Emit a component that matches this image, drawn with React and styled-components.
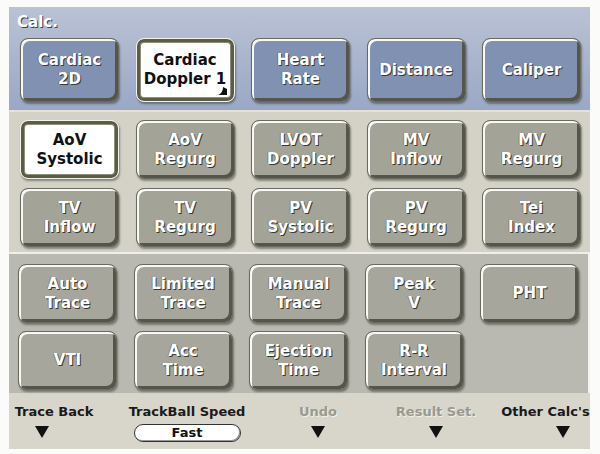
import React from 'react'
import styled, { createGlobalStyle, css } from 'styled-components'

const GlobalStyle = createGlobalStyle`
  body {
    margin: 0;
    background: #fbfbf9;
    font-family: 'DejaVu Sans', Verdana, sans-serif;
  }
`

const Frame = styled.div`
  width: 600px;
  height: 454px;
  box-sizing: border-box;
  padding: 7px 10px 5px 9px;
`

const Panel = styled.div`
  display: flex;
  flex-direction: column;
  height: 100%;
`

const TopSection = styled.div`
  height: 105px;
  box-sizing: border-box;
  padding: 6px 0 0 11px;
  background: linear-gradient(#bac2d4, #9aa8c6);
  border-bottom: 2px solid #e4e2d8;
`

const Title = styled.div`
  color: #fff;
  font-weight: bold;
  font-size: 15px;
  line-height: 18px;
  margin: 0 0 7px -3px;
  text-shadow: 1px 1px 0 #3c4050;
`

const Section = styled.div`
  box-sizing: border-box;
  height: ${(p) => p.$h}px;
  padding: ${(p) => p.$pad};
  background: ${(p) => p.$bg};
  ${(p) =>
    p.$inset &&
    css`
      border-top: 2px solid #efeee8;
      border-right: 2px solid #f4f3ee;
    `}
`

const Grid = styled.div`
  display: grid;
  grid-template-columns: repeat(5, 99px);
  grid-auto-rows: ${(p) => p.$rowH}px;
  column-gap: 16.5px;
  row-gap: ${(p) => p.$gap || 0}px;
`

const Key = styled.div`
  position: relative;
  display: flex;
  align-items: center;
  justify-content: center;
  text-align: center;
  border-radius: 8px;
  font-weight: bold;
  font-size: 15px;
  line-height: 19px;
  color: #fff;
  text-shadow: 1px 1px 0 #3a3a34, -1px 0 0 rgba(60, 60, 50, 0.35);
  background: ${(p) => p.$bg};
  border: 1px solid #6a6a5e;
  box-shadow: inset 2px 2px 0 #f8f8f4, inset -3px -3px 0 #55554b,
    1px 2px 2px rgba(40, 40, 30, 0.45);
  ${(p) =>
    p.$active &&
    css`
      background: #fff;
      color: #111;
      text-shadow: none;
      border: 1px solid #f2f2ec;
      box-shadow: inset 0 0 0 3px #5b5c44, inset 0 0 0 4px #8e8f78,
        1px 2px 2px rgba(40, 40, 30, 0.45);
    `}
`

const Corner = styled.svg`
  position: absolute;
  right: 7px;
  bottom: 6px;
`

const Footer = styled.div`
  flex: 1;
  display: grid;
  grid-template-columns: 90px 176px 86px 150px 79px;
  background: #d8d6cb;
  padding-top: 11px;
`

const FootItem = styled.div`
  display: flex;
  flex-direction: column;
  align-items: center;
  padding-right: ${(p) => p.$pr || 0}px;
  white-space: nowrap;
  font-size: 13px;
  font-weight: bold;
  line-height: 16px;
  color: ${(p) => (p.$dim ? '#9a9990' : '#1a1a1a')};
  text-shadow: ${(p) => (p.$dim ? '1px 1px 0 #f0efe8' : 'none')};
`

const Arrow = styled.div`
  width: 0;
  height: 0;
  margin-top: 6px;
  margin-left: ${(p) => p.$shift || 0}px;
  border-left: 7px solid transparent;
  border-right: 7px solid transparent;
  border-top: 12px solid #111;
`

const Pill = styled.div`
  margin-top: 4px;
  width: 107px;
  height: 18px;
  box-sizing: border-box;
  border-radius: 9px;
  background: #fff;
  border: 1px solid #333;
  box-shadow: inset -1px -1px 0 #999;
  text-align: center;
  font-size: 13px;
  line-height: 16px;
  color: #111;
`

const topKeys = [
  ['Cardiac', '2D'],
  ['Cardiac', 'Doppler 1'],
  ['Heart', 'Rate'],
  ['Distance'],
  ['Caliper'],
]

const midKeys = [
  ['AoV', 'Systolic'],
  ['AoV', 'Regurg'],
  ['LVOT', 'Doppler'],
  ['MV', 'Inflow'],
  ['MV', 'Regurg'],
  ['TV', 'Inflow'],
  ['TV', 'Regurg'],
  ['PV', 'Systolic'],
  ['PV', 'Regurg'],
  ['Tei', 'Index'],
]

const lowKeys = [
  ['Auto', 'Trace'],
  ['Limited', 'Trace'],
  ['Manual', 'Trace'],
  ['Peak', 'V'],
  ['PHT'],
  ['VTI'],
  ['Acc', 'Time'],
  ['Ejection', 'Time'],
  ['R-R', 'Interval'],
]

const Label = ({ lines }) => (
  <span>
    {lines.map((l, i) => (
      <React.Fragment key={i}>
        {i > 0 && <br />}
        {l}
      </React.Fragment>
    ))}
  </span>
)

export default function App() {
  return (
    <Frame>
      <GlobalStyle />
      <Panel>
        <TopSection>
          <Title>Calc.</Title>
          <Grid $rowH={64}>
            {topKeys.map((k, i) => (
              <Key key={i} $bg="#8091b2" $active={i === 1}>
                <Label lines={k} />
                {i === 1 && (
                  <Corner width="9" height="8" viewBox="0 0 9 8">
                    <path d="M0 8 C3 7 5 4 5 0 L9 2 L9 8 Z" fill="#111" />
                  </Corner>
                )}
              </Key>
            ))}
          </Grid>
        </TopSection>

        <Section $h={140} $pad="8px 0 0 11px" $bg="#d4d2c6">
          <Grid $rowH={59} $gap={9}>
            {midKeys.map((k, i) => (
              <Key key={i} $bg="#a4a398" $active={i === 0}>
                <Label lines={k} />
              </Key>
            ))}
          </Grid>
        </Section>

        <Section $h={141} $pad="10px 0 0 9px" $bg="#bab9b1" $inset>
          <Grid $rowH={59} $gap={8}>
            {lowKeys.map((k, i) => (
              <Key key={i} $bg="#a7a69c">
                <Label lines={k} />
              </Key>
            ))}
          </Grid>
        </Section>

        <Footer>
          <FootItem>
            Trace Back
            <Arrow $shift={-24} />
          </FootItem>
          <FootItem>
            TrackBall Speed
            <Pill>Fast</Pill>
          </FootItem>
          <FootItem $dim>
            Undo
            <Arrow />
          </FootItem>
          <FootItem $dim>
            Result Set.
            <Arrow />
          </FootItem>
          <FootItem $pr={10}>
            Other Calc's
            <Arrow $shift={34} />
          </FootItem>
        </Footer>
      </Panel>
    </Frame>
  )
}
